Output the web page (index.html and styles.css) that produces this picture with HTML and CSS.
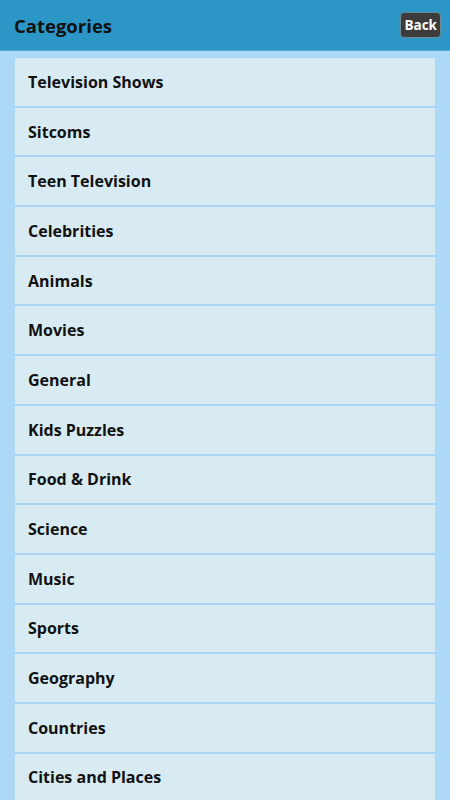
FILE: index.html
```html
<!DOCTYPE html>
<html lang="en">
<head>
  <meta charset="UTF-8">
  <title>Categories</title>
  <meta name="viewport" content="width=device-width,initial-scale=1">
  <link rel="stylesheet" href="styles.css">
</head>
<body>
  <div class="header">
    <h1>Categories</h1>
    <span class="back">Back</span>
  </div>
  <ul class="cats">
    <li>Television Shows</li>
    <li>Sitcoms</li>
    <li>Teen Television</li>
    <li>Celebrities</li>
    <li>Animals</li>
    <li>Movies</li>
    <li>General</li>
    <li>Kids Puzzles</li>
    <li>Food &amp; Drink</li>
    <li>Science</li>
    <li>Music</li>
    <li>Sports</li>
    <li>Geography</li>
    <li>Countries</li>
    <li>Cities and Places</li>
  </ul>
</body>
</html>
```

FILE: styles.css
```css
body{margin:0;background:#aed9f6;font-family:"Open Sans",sans-serif;color:#111;}
.header{display:flex;align-items:center;justify-content:space-between;height:50px;padding:0 9px 0 14px;background:#2c96c6;border-bottom:1px solid #4aa6d6;}
.header h1{margin:0;font-size:18.5px;font-weight:bold;color:#111;}
.back{background:#3c3c3c;color:#fff;font-size:13.5px;font-weight:bold;padding:3px 3px;border-radius:4px;border:1px solid #6a8a98;line-height:18px;}
.cats{list-style:none;margin:7px 15px 0;padding:0;}
.cats li{display:flex;align-items:center;height:47.7px;padding-left:13px;background:#d8ebf3;border-bottom:2px solid #a8d4f4;font-size:16px;font-weight:bold;}
```
